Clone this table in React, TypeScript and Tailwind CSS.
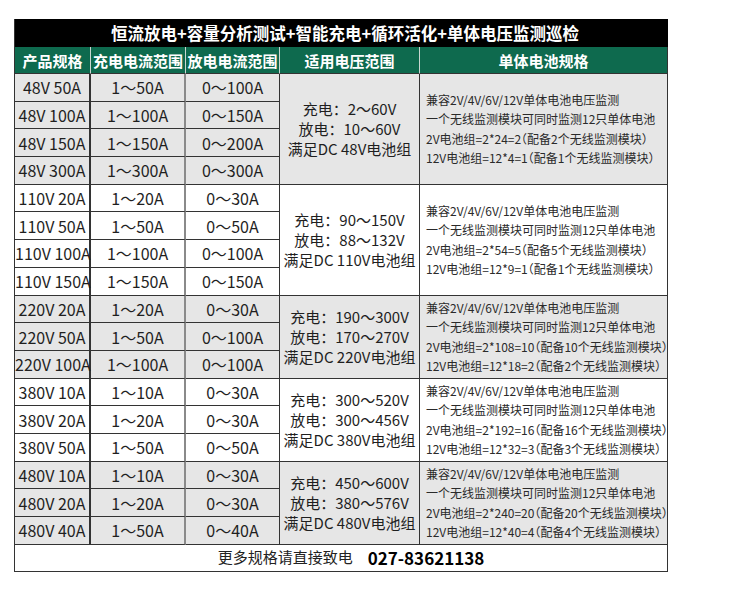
const groups = [
  {
    gray: true,
    rows: [
      ["48V 50A", "1～50A", "0～100A"],
      ["48V 100A", "1～100A", "0～150A"],
      ["48V 150A", "1～150A", "0～200A"],
      ["48V 300A", "1～300A", "0～300A"],
    ],
    volt: ["充电：2～60V", "放电：10～60V", "满足DC 48V电池组"],
    spec: ["2V电池组=2*24=2（配备2个无线监测模块）", "12V电池组=12*4=1（配备1个无线监测模块）"],
  },
  {
    gray: false,
    rows: [
      ["110V 20A", "1～20A", "0～30A"],
      ["110V 50A", "1～50A", "0～50A"],
      ["110V 100A", "1～100A", "0～100A"],
      ["110V 150A", "1～150A", "0～150A"],
    ],
    volt: ["充电：90～150V", "放电：88～132V", "满足DC 110V电池组"],
    spec: ["2V电池组=2*54=5（配备5个无线监测模块）", "12V电池组=12*9=1（配备1个无线监测模块）"],
  },
  {
    gray: true,
    rows: [
      ["220V 20A", "1～20A", "0～30A"],
      ["220V 50A", "1～50A", "0～100A"],
      ["220V 100A", "1～100A", "0～100A"],
    ],
    volt: ["充电：190～300V", "放电：170～270V", "满足DC 220V电池组"],
    spec: ["2V电池组=2*108=10（配备10个无线监测模块）", "12V电池组=12*18=2（配备2个无线监测模块）"],
  },
  {
    gray: false,
    rows: [
      ["380V 10A", "1～10A", "0～30A"],
      ["380V 20A", "1～20A", "0～30A"],
      ["380V 50A", "1～50A", "0～50A"],
    ],
    volt: ["充电：300～520V", "放电：300～456V", "满足DC 380V电池组"],
    spec: ["2V电池组=2*192=16（配备16个无线监测模块）", "12V电池组=12*32=3（配备3个无线监测模块）"],
  },
  {
    gray: true,
    rows: [
      ["480V 10A", "1～10A", "0～30A"],
      ["480V 20A", "1～20A", "0～30A"],
      ["480V 40A", "1～50A", "0～40A"],
    ],
    volt: ["充电：450～600V", "放电：380～576V", "满足DC 480V电池组"],
    spec: ["2V电池组=2*240=20（配备20个无线监测模块）", "12V电池组=12*40=4（配备4个无线监测模块）"],
  },
]

const headers = ["产品规格", "充电电流范围", "放电电流范围", "适用电压范围", "单体电池规格"]

export default function App() {
  return (
    <div className="min-h-[595px] bg-white pl-[14px] pt-[19px] font-['Noto_Sans_CJK_SC','Noto_Sans',sans-serif] text-[#1f1f1f]">
      <table className="table-fixed border-separate border-spacing-0 w-[653px] border-l border-[#333]">
        <colgroup>
          <col className="w-[76px]" />
          <col className="w-[95px]" />
          <col className="w-[94px]" />
          <col className="w-[140px]" />
          <col className="w-[248px]" />
        </colgroup>
        <tbody>
          <tr className="h-[28px]">
            <td
              colSpan={5}
              className="bg-black pl-2 text-center text-[16.5px] font-bold leading-none text-white border-r border-black"
            >
              恒流放电+容量分析测试+智能充电+循环活化+单体电压监测巡检
            </td>
          </tr>
          <tr className="h-[27px]">
            {headers.map((h, i) => (
              <td
                key={h}
                className={`bg-[#0e6a4e] p-0 text-center text-[15px] font-bold leading-none whitespace-nowrap text-white border-b border-b-[#333] ${
                  i < 4 ? "border-r border-r-[#c9d6d0]" : "border-r border-r-[#333]"
                }`}
              >
                {h}
              </td>
            ))}
          </tr>
          {groups.map((g) =>
            g.rows.map((r, ri) => {
              const bg = g.gray ? "bg-[#e6e6e6]" : "bg-white"
              return (
                <tr key={r[0]} className="h-[27.7px]">
                  <td className={`${bg} p-0 text-center text-[16px] leading-none whitespace-nowrap border-r-2 border-b border-[#333]`}>
                    {r[0]}
                  </td>
                  <td className={`${bg} p-0 text-center text-[16px] leading-none whitespace-nowrap border-r-2 border-r-[#8a8a8a] border-b border-b-[#333]`}>
                    {r[1]}
                  </td>
                  <td className={`${bg} p-0 text-center text-[16px] leading-none whitespace-nowrap border-r border-b border-[#333]`}>
                    {r[2]}
                  </td>
                  {ri === 0 && (
                    <>
                      <td
                        rowSpan={g.rows.length}
                        className={`${bg} p-0 text-center text-[15px] leading-[20px] whitespace-nowrap border-r border-b border-[#333]`}
                      >
                        {g.volt.map((v) => (
                          <div key={v}>{v}</div>
                        ))}
                      </td>
                      <td
                        rowSpan={g.rows.length}
                        className={`${bg} py-0 pl-[6px] pr-0 text-left text-[12px] leading-[19.5px] whitespace-nowrap text-[#2a2a2a] [font-feature-settings:'halt'] border-r border-b border-[#333]`}
                      >
                        <div>兼容2V/4V/6V/12V单体电池电压监测</div>
                        <div>一个无线监测模块可同时监测12只单体电池</div>
                        {g.spec.map((s) => (
                          <div key={s}>{s}</div>
                        ))}
                      </td>
                    </>
                  )}
                </tr>
              )
            })
          )}
          <tr className="h-[27px]">
            <td colSpan={5} className="bg-white p-0 border-r border-b border-[#333]">
              <div className="flex items-center justify-center gap-[15px] pl-5">
                <span className="text-[15px] text-[#222]">更多规格请直接致电</span>
                <span className="text-[17px] font-bold text-black">027-83621138</span>
              </div>
            </td>
          </tr>
        </tbody>
      </table>
    </div>
  )
}
